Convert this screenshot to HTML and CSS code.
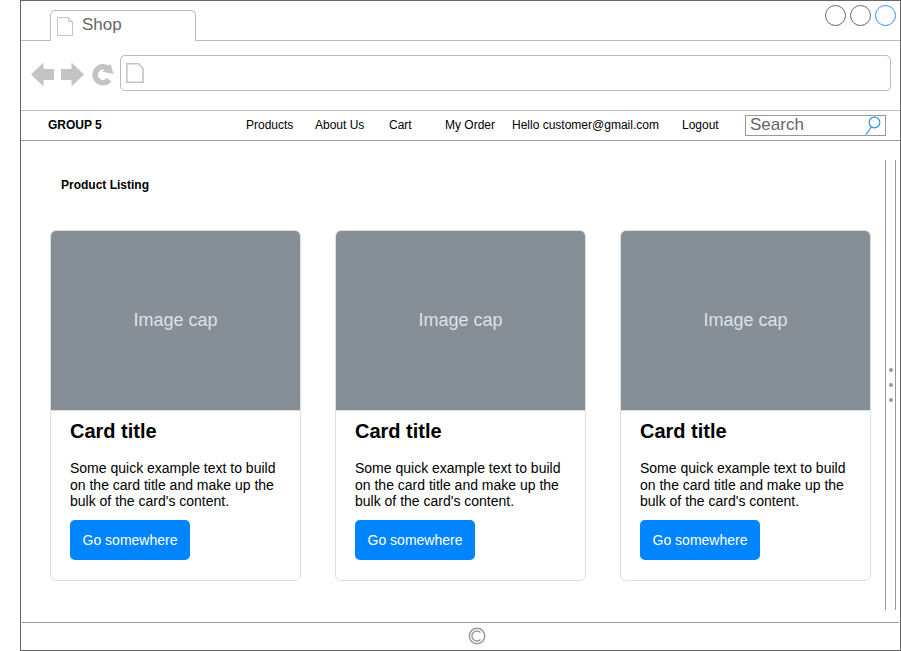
FILE: index.html
```html
<!DOCTYPE html>
<html lang="en">
<head>
<meta charset="utf-8">
<title>Shop</title>
<link rel="stylesheet" href="styles.css">
</head>
<body>
<div class="window">
  <header class="tabs">
    <div class="tab">
      <svg class="tab-icon" width="16" height="19" viewBox="0 0 16 19"><path d="M.5 .5H11.5L15.5 4.5V18.500H.5ZM11.500 .5V4.500H15.500" /></svg>
      <span>Shop</span>
    </div>
    <div class="controls">
      <svg width="72" height="22" viewBox="0 0 72 22"><circle cx="10.500" cy="10.500" r="10"/><circle cx="35.500" cy="10.500" r="10"/><circle class="blue" cx="60.500" cy="10.500" r="10"/></svg>
    </div>
  </header>
  <div class="toolbar">
    <svg class="arrows" width="84" height="26" viewBox="0 0 84 26">
      <path d="M0 12.500L12.500 .5V7H23V18H12.500V24.500Z"/>
      <path d="M53 12.500L40.500 .5V7H30V18H40.500V24.500Z"/>
      <path class="reload" d="M78.300 17.800A8 8 0 1 1 77.500 6.800"/>
      <path d="M79.500 1.800L82.500 12L71.500 9.800Z"/>
    </svg>
    <div class="address">
      <svg width="18" height="20" viewBox="0 0 18 20"><path d="M.8 .8H12.500L17 5.300V19.200H.8Z"/></svg>
    </div>
  </div>
  <nav class="nav">
    <b class="brand">GROUP 5</b>
    <a class="products">Products</a>
    <a class="about">About Us</a>
    <a class="cart">Cart</a>
    <a class="order">My Order</a>
    <a class="hello">Hello customer@gmail.com</a>
    <a class="logout">Logout</a>
    <div class="search"><span>Search</span>
      <svg width="17" height="20" viewBox="0 0 17 20"><circle cx="9.500" cy="6.500" r="5.300"/><path d="M6.500 11L.8 18.500"/></svg>
    </div>
  </nav>
  <div class="content">
    <main>
      <h1>Product Listing</h1>
      <div class="cards">
        <article class="card">
          <div class="image">Image cap</div>
          <div class="body"><h2>Card title</h2><p>Some quick example text to build<br>on the card title and make up the<br>bulk of the card's content.</p><a class="button">Go somewhere</a></div>
        </article>
        <article class="card">
          <div class="image">Image cap</div>
          <div class="body"><h2>Card title</h2><p>Some quick example text to build<br>on the card title and make up the<br>bulk of the card's content.</p><a class="button">Go somewhere</a></div>
        </article>
        <article class="card">
          <div class="image">Image cap</div>
          <div class="body"><h2>Card title</h2><p>Some quick example text to build<br>on the card title and make up the<br>bulk of the card's content.</p><a class="button">Go somewhere</a></div>
        </article>
      </div>
    </main>
    <div class="scrollbar"><i></i><i></i><i></i></div>
  </div>
  <footer>
    <svg width="18" height="18" viewBox="0 0 18 18"><circle cx="9" cy="9" r="7.700"/><path d="M12.500 5.500A5 5 0 1 0 12.500 12.500"/></svg>
  </footer>
</div>
</body>
</html>
```
FILE: styles.css
```css
* { box-sizing: border-box; }
body {
  margin: 0;
  background: #fff;
  color: #000;
  font-family: "Liberation Sans", Arial, sans-serif;
}
svg { display: block; fill: none; flex: none; }
.window {
  width: 881px;
  height: 651px;
  margin-left: 20px;
  border: 1px solid #666;
  display: flex;
  flex-direction: column;
}
.tabs {
  height: 40px;
  border-bottom: 1px solid #bbb;
  display: flex;
  justify-content: space-between;
  padding: 9px 4px 0 29px;
}
.tab {
  width: 146px;
  height: 31px;
  border: 1px solid #bbb;
  border-bottom: 0;
  border-radius: 5px 5px 0 0;
  background: #fff;
  display: flex;
  padding: 6px 0 0 6px;
  color: #666;
  font-size: 17px;
  line-height: 19px;
}
.tab span { margin: -2px 0 0 9px; }
.tab-icon { stroke: #c4c4c4; }
.controls { margin-top: -5px; margin-right: -1px; }
.controls svg { stroke: #666; }
.controls .blue { stroke: #2a94f4; }
.toolbar {
  height: 70px;
  border-bottom: 1px solid #bbb;
  display: flex;
  padding: 14px 9px 0 10px;
}
.arrows { margin-top: 7px; fill: #c4c4c4; }
.arrows .reload { fill: none; stroke: #c4c4c4; stroke-width: 5.500; }
.address {
  margin-left: 5px;
  flex: 1;
  height: 36px;
  border: 1px solid #bbb;
  border-radius: 5px;
  padding: 7px 5px;
}
.address svg { stroke: #c4c4c4; stroke-width: 1.600; }
.nav {
  height: 30px;
  border-bottom: 1px solid #999;
  display: flex;
  align-items: flex-start;
  font-size: 12px;
  line-height: 14px;
  padding: 7px 0 0 27px;
  white-space: nowrap;
}
.nav a { flex: none; }
.brand { width: 198px; }
.products { width: 69px; }
.about { width: 74px; }
.cart { width: 56px; }
.order { width: 67px; }
.hello { width: 170px; }
.logout { width: 63px; }
.search {
  width: 141px;
  height: 21px;
  margin-top: -3px;
  border: 1px solid #999;
  display: flex;
  justify-content: space-between;
  padding: 0 3px 0 4px;
  color: #666;
  font-size: 17px;
  line-height: 18px;
}
.search svg { stroke: #2a94f4; stroke-width: 1.2; }
.content { height: 481px; display: flex; }
main { width: 864px; padding: 37px 0 0 29px; }
h1 { margin: 0 0 37px 11px; font-size: 12px; line-height: 15px; }
.cards { display: flex; gap: 34px; }
.card {
  width: 251px;
  height: 351px;
  border: 1px solid #dfdfdf;
  border-radius: 6px;
  overflow: hidden;
  flex: none;
}
.image {
  height: 179px;
  background: #868e96;
  color: #dee2e6;
  font-size: 18px;
  line-height: 178px;
  text-align: center;
}
.body { border-top: 1px solid #dfdfdf; padding: 9px 19px; }
h2 { margin: 0 0 17px; font-size: 20px; line-height: 23px; }
p { margin: 0 0 10px; font-size: 14px; line-height: 16.700px; white-space: nowrap; }
.button {
  display: block;
  width: 120px;
  height: 40px;
  border-radius: 5px;
  background: #0085ff;
  color: #fff;
  font-size: 14px;
  line-height: 41px;
  text-align: center;
}
.scrollbar {
  width: 11px;
  height: 450px;
  margin-top: 19px;
  border: solid #999;
  border-width: 0 1px;
  display: flex;
  flex-direction: column;
  align-items: center;
  padding-top: 208px;
  gap: 11px;
}
.scrollbar i { width: 4px; height: 4px; border-radius: 50%; background: #999; }
footer {
  flex: 1;
  margin: 0 1px;
  border-top: 1px solid #999;
  display: flex;
  justify-content: center;
  padding: 4px 0 0 33px;
}
footer svg { stroke: #999; stroke-width: 1.500; }
```
